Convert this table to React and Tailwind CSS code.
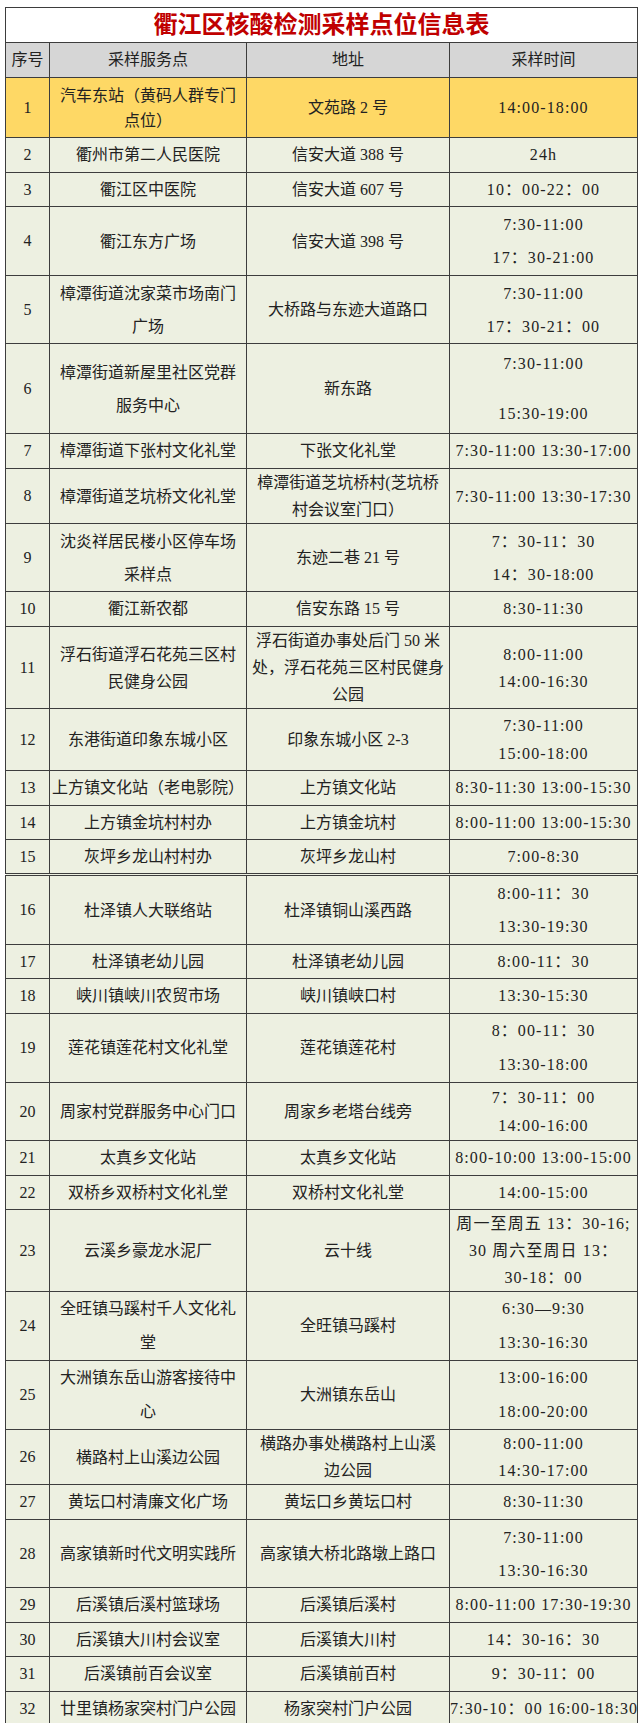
const rows = [
  { n: "1", h: "h-[60px]", lh: "leading-[25px]", yellow: true, a: ["汽车东站（黄码人群专门", "点位）"], b: ["文苑路 2 号"], t: ["14:00-18:00"] },
  { n: "2", h: "h-[35px]", a: ["衢州市第二人民医院"], b: ["信安大道 388 号"], t: ["24h"] },
  { n: "3", h: "h-[34px]", a: ["衢江区中医院"], b: ["信安大道 607 号"], t: ["10：00-22：00"] },
  { n: "4", h: "h-[69px]", lh: "leading-[33px]", a: ["衢江东方广场"], b: ["信安大道 398 号"], t: ["7:30-11:00", "17：30-21:00"] },
  { n: "5", h: "h-[68px]", lh: "leading-[33px]", a: ["樟潭街道沈家菜市场南门", "广场"], b: ["大桥路与东迹大道路口"], t: ["7:30-11:00", "17：30-21：00"] },
  { n: "6", h: "h-[90px]", lh: "leading-[33px]", tlh: "leading-[25px]", a: ["樟潭街道新屋里社区党群", "服务中心"], b: ["新东路"], t: ["7:30-11:00", "\u00a0", "15:30-19:00"] },
  { n: "7", h: "h-[35px]", a: ["樟潭街道下张村文化礼堂"], b: ["下张文化礼堂"], t: ["7:30-11:00 13:30-17:00"] },
  { n: "8", h: "h-[55px]", lh: "leading-[27px]", a: ["樟潭街道芝坑桥文化礼堂"], b: ["樟潭街道芝坑桥村(芝坑桥", "村会议室门口）"], t: ["7:30-11:00 13:30-17:30"] },
  { n: "9", h: "h-[68px]", lh: "leading-[33px]", a: ["沈炎祥居民楼小区停车场", "采样点"], b: ["东迹二巷 21 号"], t: ["7：30-11：30", "14：30-18:00"] },
  { n: "10", h: "h-[35px]", a: ["衢江新农都"], b: ["信安东路 15 号"], t: ["8:30-11:30"] },
  { n: "11", h: "h-[81px]", lh: "leading-[27px]", a: ["浮石街道浮石花苑三区村", "民健身公园"], b: ["浮石街道办事处后门 50 米", "处，浮石花苑三区村民健身", "公园"], t: ["8:00-11:00", "14:00-16:30"] },
  { n: "12", h: "h-[62px]", lh: "leading-[28px]", a: ["东港街道印象东城小区"], b: ["印象东城小区 2-3"], t: ["7:30-11:00", "15:00-18:00"] },
  { n: "13", h: "h-[35px]", a: ["上方镇文化站（老电影院）"], b: ["上方镇文化站"], t: ["8:30-11:30 13:00-15:30"] },
  { n: "14", h: "h-[34px]", a: ["上方镇金坑村村办"], b: ["上方镇金坑村"], t: ["8:00-11:00 13:00-15:30"] },
  { n: "15", h: "h-[35px]", double: true, a: ["灰坪乡龙山村村办"], b: ["灰坪乡龙山村"], t: ["7:00-8:30"] },
  { n: "16", h: "h-[70px]", lh: "leading-[33px]", a: ["杜泽镇人大联络站"], b: ["杜泽镇铜山溪西路"], t: ["8:00-11：30", "13:30-19:30"] },
  { n: "17", h: "h-[34px]", a: ["杜泽镇老幼儿园"], b: ["杜泽镇老幼儿园"], t: ["8:00-11：30"] },
  { n: "18", h: "h-[35px]", a: ["峡川镇峡川农贸市场"], b: ["峡川镇峡口村"], t: ["13:30-15:30"] },
  { n: "19", h: "h-[68px]", lh: "leading-[34px]", a: ["莲花镇莲花村文化礼堂"], b: ["莲花镇莲花村"], t: ["8：00-11：30", "13:30-18:00"] },
  { n: "20", h: "h-[58px]", lh: "leading-[28px]", a: ["周家村党群服务中心门口"], b: ["周家乡老塔台线旁"], t: ["7：30-11：00", "14:00-16:00"] },
  { n: "21", h: "h-[35px]", a: ["太真乡文化站"], b: ["太真乡文化站"], t: ["8:00-10:00 13:00-15:00"] },
  { n: "22", h: "h-[34px]", a: ["双桥乡双桥村文化礼堂"], b: ["双桥村文化礼堂"], t: ["14:00-15:00"] },
  { n: "23", h: "h-[78px]", lh: "leading-[27px]", a: ["云溪乡豪龙水泥厂"], b: ["云十线"], t: ["周一至周五 13：30-16;", "30 周六至周日 13：", "30-18：00"] },
  { n: "24", h: "h-[68px]", lh: "leading-[34px]", a: ["全旺镇马蹊村千人文化礼", "堂"], b: ["全旺镇马蹊村"], t: ["6:30—9:30", "13:30-16:30"] },
  { n: "25", h: "h-[69px]", lh: "leading-[34px]", a: ["大洲镇东岳山游客接待中", "心"], b: ["大洲镇东岳山"], t: ["13:00-16:00", "18:00-20:00"] },
  { n: "26", h: "h-[54px]", lh: "leading-[27px]", a: ["横路村上山溪边公园"], b: ["横路办事处横路村上山溪", "边公园"], t: ["8:00-11:00", "14:30-17:00"] },
  { n: "27", h: "h-[35px]", a: ["黄坛口村清廉文化广场"], b: ["黄坛口乡黄坛口村"], t: ["8:30-11:30"] },
  { n: "28", h: "h-[68px]", lh: "leading-[33px]", a: ["高家镇新时代文明实践所"], b: ["高家镇大桥北路墩上路口"], t: ["7:30-11:00", "13:30-16:30"] },
  { n: "29", h: "h-[35px]", a: ["后溪镇后溪村篮球场"], b: ["后溪镇后溪村"], t: ["8:00-11:00 17:30-19:30"] },
  { n: "30", h: "h-[34px]", a: ["后溪镇大川村会议室"], b: ["后溪镇大川村"], t: ["14：30-16：30"] },
  { n: "31", h: "h-[35px]", a: ["后溪镇前百会议室"], b: ["后溪镇前百村"], t: ["9：30-11：00"] },
  { n: "32", h: "h-[34px]", a: ["廿里镇杨家突村门户公园"], b: ["杨家突村门户公园"], t: ["7:30-10：00 16:00-18:30"] },
];

const Lines = ({ lines, lh }) => (
  <div className={lh || "leading-[24px]"}>
    {lines.map((l, i) => (
      <div key={i} className="whitespace-nowrap">{l}</div>
    ))}
  </div>
);

const font = "font-['Liberation_Serif','Noto_Sans_CJK_SC',serif]";
const cell = "border border-[#3d3d3d] text-center align-middle p-0 text-[16px] text-[#222] " + font;

export default function App() {
  return (
    <div className={"bg-white w-[640px] h-[1723px] pt-[7px] pl-[5px] " + font}>
      <table className={"border-collapse table-fixed w-[632px] " + font}>
        <colgroup>
          <col className="w-[44px]" />
          <col className="w-[197px]" />
          <col className="w-[203px]" />
          <col className="w-[188px]" />
        </colgroup>
        <tbody>
          <tr className="h-[35px] bg-white">
            <td colSpan={4} className={cell + " !text-[24px] font-bold !text-[#c00000] leading-none"}>
              衢江区核酸检测采样点位信息表
            </td>
          </tr>
          <tr className="h-[35px] bg-[#d6d6d6]">
            <td className={cell}>序号</td>
            <td className={cell}>采样服务点</td>
            <td className={cell}>地址</td>
            <td className={cell}>采样时间</td>
          </tr>
          {rows.map((r) => (
            <tr key={r.n} className={r.h + (r.yellow ? " bg-[#fed865]" : " bg-[#edf0e1]") + (r.double ? " border-b-[3px] border-double border-[#3d3d3d]" : "")}>
              <td className={cell}>{r.n}</td>
              <td className={cell}><Lines lines={r.a} lh={r.lh} /></td>
              <td className={cell}><Lines lines={r.b} lh={r.lh} /></td>
              <td className={cell + " tracking-[1.1px]"}><Lines lines={r.t} lh={r.tlh || r.lh} /></td>
            </tr>
          ))}
        </tbody>
      </table>
    </div>
  );
}
